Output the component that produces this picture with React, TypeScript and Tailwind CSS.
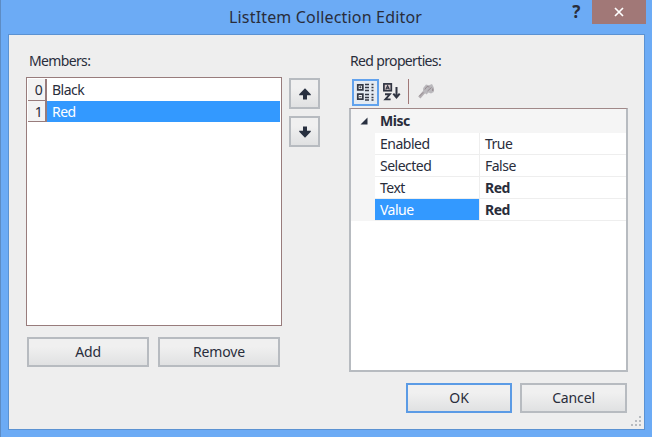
import type { ReactNode } from "react";

const buttonFace =
  "flex items-center justify-center border-2 bg-linear-to-b from-[#f0f0f0] from-30% to-[#e0e1e2]";

function ArrowIcon({ down = false }: { down?: boolean }) {
  return (
    <svg width="12" height="12" viewBox="0 0 12 12" className={down ? "rotate-180" : ""}>
      <path d="M6 0.3 L11.8 6.2 V7.2 H8 V11.5 H4 V7.2 H0.2 V6.2 Z" fill="#283040" />
    </svg>
  );
}

function PushButton({ children, className }: { children: ReactNode; className: string }) {
  return (
    <button className={`${buttonFace} h-[30px] pb-px text-[14px] tracking-[-0.15px] ${className}`}>{children}</button>
  );
}

function CategoryIcon() {
  return (
    <svg width="20" height="19" viewBox="0 0 20 19" fill="none" stroke="#353945">
      <path d="M1.8 1.8h5v5h-5zM1.8 11.2h5v5h-5z" fill="#fff" strokeWidth="1.8" />
      <path d="M3.2 4.3h2.2M4.3 3.2v2.2M3.2 13.7h2.2" strokeWidth="1" />
      <path d="M9 1.5h4M9 4.5h4M9 7.5h4M9 11.5h4M9 14.5h4M9 17h4" strokeWidth="1.5" />
      <path d="M15.5 1.5h2M15.5 4.5h2M15.5 7.5h2M15.5 11.5h2M15.5 14.5h2M15.5 17h2" strokeWidth="1.6" />
    </svg>
  );
}

function SortIcon() {
  return (
    <svg width="18" height="19" viewBox="0 0 18 19" fill="none" stroke="#303542">
      <rect x="0.9" y="0.9" width="7.4" height="6.8" fill="#d8c9ca" strokeWidth="1.7" />
      <path d="M2.8 6.6 L4.6 2.8 L6.4 6.6M3.2 5.3h2.8" strokeWidth="1.1" />
      <path d="M2 11.3h4.8L2.4 16.4h5.2" strokeWidth="1.9" />
      <path d="M13.5 4v9.5M10.3 10.6l3.2 3.9 3.2-3.9" strokeWidth="2" />
    </svg>
  );
}

function WrenchIcon() {
  return (
    <svg width="17" height="17" viewBox="0 0 17 17" fill="none">
      <path d="M1.3 14.5 L7 8" stroke="#b3aeb2" strokeWidth="3" />
      <path d="M5.2 5 L8 1.5 L11 2.2 L14 1 L15.8 4.5 V9 L13 10.5 L10.5 9.5 L8.5 11.5 L5 8.5 Z" fill="#bab8bc" />
      <path d="M6.8 6.5 L9 3.5 L11.5 4 M9.5 8 L13.5 4.5M1.5 13 L5 9.5" stroke="#968b90" strokeWidth="1" />
      <path d="M14.8 5.5v2.5" stroke="#968b90" strokeWidth="1.3" />
    </svg>
  );
}

const properties = [
  { name: "Enabled", value: "True", bold: false, selected: false },
  { name: "Selected", value: "False", bold: false, selected: false },
  { name: "Text", value: "Red", bold: true, selected: false },
  { name: "Value", value: "Red", bold: true, selected: true },
];

export default function App() {
  return (
    <div className="flex h-[437px] w-[652px] flex-col overflow-hidden border-l border-[#5d8cc4] bg-[#6cabf5] pr-[7px] pl-[7px] font-['Noto_Sans','Open_Sans',sans-serif] text-[14px] tracking-[-0.5px] text-[#292d3b]">
      <header className="flex h-[34px] shrink-0 items-start">
        <h1 className="flex h-[34px] flex-1 items-center pl-[221px] text-[16px] tracking-[0.17px] whitespace-nowrap">
          ListItem Collection Editor
        </h1>
        <span className="flex h-[24px] w-[32px] items-center justify-center text-[17px] font-bold">?</span>
        <button className="-mr-[1px] flex h-[24px] w-[54px] items-center justify-center bg-[#a17877]">
          <svg width="10" height="10" viewBox="0 0 10 10" stroke="#fff" strokeWidth="1.7">
            <path d="M1 1l8 8M9 1l-8 8" />
          </svg>
        </button>
      </header>
      <main className="flex h-[396px] shrink-0 border border-[#5b92d2] bg-[#eeeeee] pl-[17px]">
        <section className="w-[256px]">
          <h2 className="flex h-[42px] items-center pt-[9px] pl-[3px] tracking-[-0.65px]">Members:</h2>
          <ul className="h-[249px] border border-[#987c7c] bg-white p-px">
            <li className="flex h-[22px]">
              <span className="flex w-[19px] items-center justify-center border-r-2 border-b border-[#987c7c] bg-[#f3f3f3] pb-px pl-1">0</span>
              <span className="flex items-center pb-px pl-[5px]">Black</span>
            </li>
            <li className="flex h-[21px] bg-[#3399ff]">
              <span className="flex w-[19px] items-center justify-center border-r-2 border-b border-[#987c7c] bg-[#f3f3f3] pl-1">1</span>
              <span className="flex items-center pb-px pl-[5px] text-white">Red</span>
            </li>
          </ul>
          <div className="flex gap-[9px] pt-[11px] pl-px">
            <PushButton className="w-[122px] border-[#b7bbc0]">Add</PushButton>
            <PushButton className="w-[122px] border-[#b7bbc0]">Remove</PushButton>
          </div>
        </section>
        <div className="flex flex-col gap-[7px] pt-[43px] pl-[7px]">
          <button className={`${buttonFace} h-[31px] w-[31px] border-[#b7bbc0]`}>
            <ArrowIcon />
          </button>
          <button className={`${buttonFace} h-[31px] w-[31px] border-[#b7bbc0]`}>
            <ArrowIcon down />
          </button>
        </div>
        <section className="ml-[29px] w-[279px]">
          <h2 className="flex h-[42px] items-center pt-[9px] pl-px tracking-[-0.65px]">Red properties:</h2>
          <div className="flex h-[31px] items-start pt-[2px] pl-[3px]">
            <span className="flex h-[27px] w-[27px] items-center justify-center border-2 border-[#62a2ed] bg-[#e4eaf2]">
              <CategoryIcon />
            </span>
            <span className="mt-[4px] ml-[4px]">
              <SortIcon />
            </span>
            <span className="ml-[7px] h-[25px] w-px bg-[#a17877]" />
            <span className="mt-[4px] ml-[9px]">
              <WrenchIcon />
            </span>
          </div>
          <div className="h-[264px] border-2 border-t border-[#b7bbc0] border-t-[#a08888] bg-white">
            <div className="flex h-[24px] items-center bg-[#f5f5f5] pb-px font-bold">
              <span className="w-[29px] pl-[9px]">
                <svg width="8" height="8" viewBox="0 0 8 8">
                  <path d="M7.5 0.5V7.5H0.5z" fill="#283040" />
                </svg>
              </span>
              Misc
            </div>
            {properties.map((p) => (
              <div key={p.name} className="flex h-[22px]">
                <span className="w-[24px] bg-[#f5f5f5]" />
                <span
                  className={`flex w-[104px] items-center border-b border-[#eeeeee] pl-[5px] ${p.selected ? "bg-[#3399ff] text-white" : ""}`}
                >
                  {p.name}
                </span>
                <span className={`flex flex-1 items-center border-b border-l border-[#eeeeee] pl-[5px] ${p.bold ? "font-bold" : ""}`}>
                  {p.value}
                </span>
              </div>
            ))}
          </div>
          <div className="-mr-[1px] flex justify-end gap-[8px] pt-[11px] pr-[2px]">
            <PushButton className="w-[106px] border-[#5b9be5]">OK</PushButton>
            <PushButton className="w-[107px] border-[#b7bbc0]">Cancel</PushButton>
          </div>
        </section>
        <div className="mb-[2px] ml-auto mr-[2px] self-end">
          <svg width="11" height="11" viewBox="0 0 11 11" fill="#b7bbc0">
            <path d="M8 0h2v2H8zM4 4h2v2H4zM8 4h2v2H8zM0 8h2v2H0zM4 8h2v2H4zM8 8h2v2H8z" />
          </svg>
        </div>
      </main>
    </div>
  );
}
